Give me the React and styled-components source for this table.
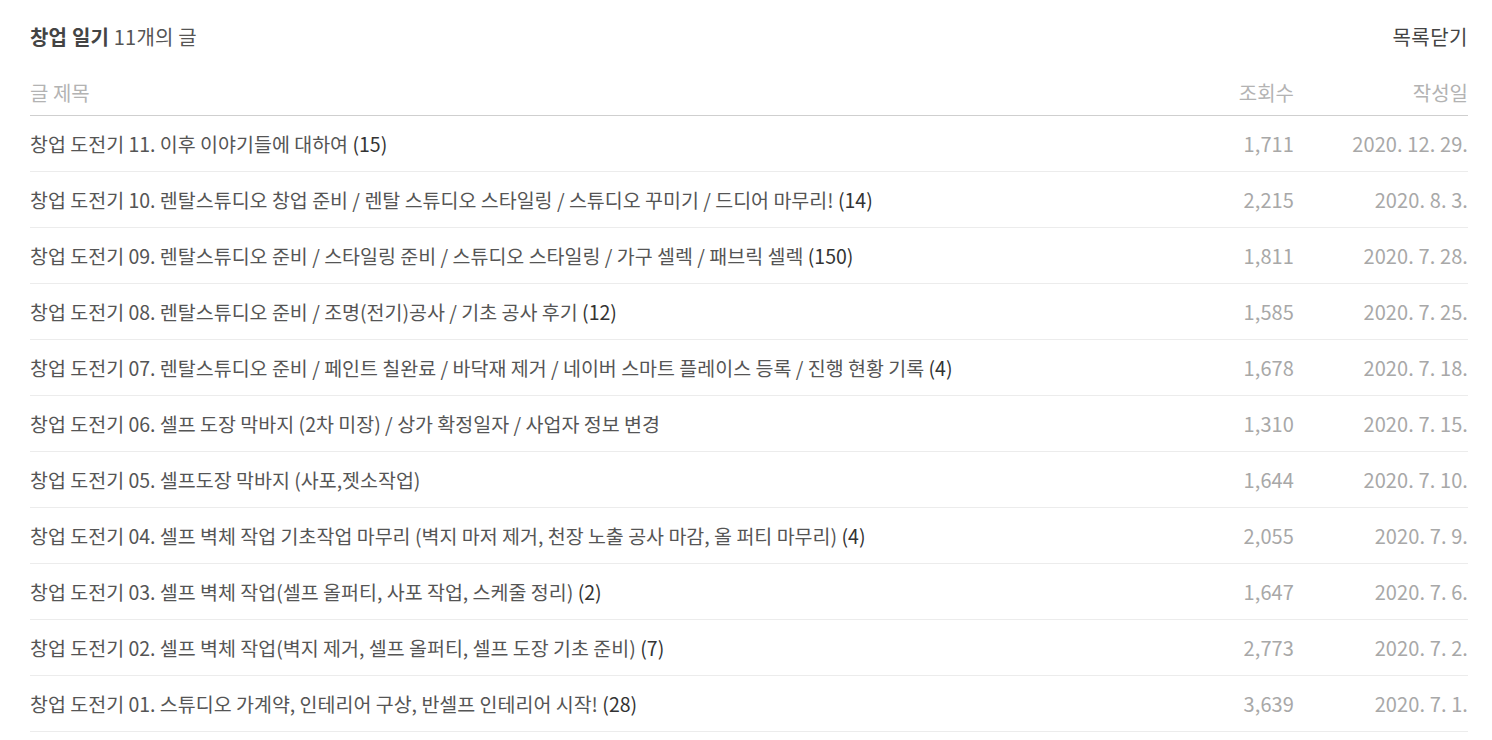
import React from "react";
import styled, { createGlobalStyle } from "styled-components";

const Global = createGlobalStyle`
  body {
    margin: 0;
    background: #fff;
    font-family: "Noto Sans CJK KR", "Noto Sans", sans-serif;
  }
`;

const Wrap = styled.div`
  padding: 13px 24px 0 30px;
`;

const TitleBar = styled.div`
  display: flex;
  align-items: center;
  justify-content: space-between;
  height: 46px;
  font-size: 20px;
  color: #555;
`;

const Title = styled.div`
  color: #555;
  letter-spacing: 0.2px;
  strong {
    font-weight: 700;
    color: #444;
  }
`;

const Close = styled.button`
  border: none;
  background: none;
  padding: 0;
  font: inherit;
  font-size: 20px;
  letter-spacing: 0.5px;
  color: #444;
  cursor: pointer;
`;

const Grid = styled.div`
  display: grid;
  grid-template-columns: 1fr 100px 174px;
  align-items: center;
  height: ${(p) => p.$h}px;
  border-bottom: 1px solid ${(p) => p.$line};
  font-size: 19.5px;
  box-sizing: border-box;
`;

const HeadRow = styled(Grid)`
  margin-top: 10px;
  color: #b3b3b3;
  font-size: 20px;
`;

const Cell = styled.div`
  text-align: ${(p) => (p.$right ? "right" : "left")};
  color: ${(p) => p.$color || "inherit"};
  white-space: nowrap;
  overflow: hidden;
`;

const Meta = styled(Cell)`
  font-size: 20px;
  letter-spacing: 0.1px;
`;

const Subject = styled.span`
  color: #555;
`;

const Count = styled.span`
  color: #333;
`;

const posts = [
  ["창업 도전기 11. 이후 이야기들에 대하여", 15, "1,711", "2020. 12. 29."],
  ["창업 도전기 10. 렌탈스튜디오 창업 준비 / 렌탈 스튜디오 스타일링 / 스튜디오 꾸미기 / 드디어 마무리!", 14, "2,215", "2020. 8. 3."],
  ["창업 도전기 09. 렌탈스튜디오 준비 / 스타일링 준비 / 스튜디오 스타일링 / 가구 셀렉 / 패브릭 셀렉", 150, "1,811", "2020. 7. 28."],
  ["창업 도전기 08. 렌탈스튜디오 준비 / 조명(전기)공사 / 기초 공사 후기", 12, "1,585", "2020. 7. 25."],
  ["창업 도전기 07. 렌탈스튜디오 준비 / 페인트 칠완료 / 바닥재 제거 / 네이버 스마트 플레이스 등록 / 진행 현황 기록", 4, "1,678", "2020. 7. 18."],
  ["창업 도전기 06. 셀프 도장 막바지 (2차 미장) / 상가 확정일자 / 사업자 정보 변경", null, "1,310", "2020. 7. 15."],
  ["창업 도전기 05. 셀프도장 막바지 (사포,젯소작업)", null, "1,644", "2020. 7. 10."],
  ["창업 도전기 04. 셀프 벽체 작업 기초작업 마무리 (벽지 마저 제거, 천장 노출 공사 마감, 올 퍼티 마무리)", 4, "2,055", "2020. 7. 9."],
  ["창업 도전기 03. 셀프 벽체 작업(셀프 올퍼티, 사포 작업, 스케줄 정리)", 2, "1,647", "2020. 7. 6."],
  ["창업 도전기 02. 셀프 벽체 작업(벽지 제거, 셀프 올퍼티, 셀프 도장 기초 준비)", 7, "2,773", "2020. 7. 2."],
  ["창업 도전기 01. 스튜디오 가계약, 인테리어 구상, 반셀프 인테리어 시작!", 28, "3,639", "2020. 7. 1."],
];

export default function App() {
  return (
    <Wrap>
      <Global />
      <TitleBar>
        <Title>
          <strong>창업 일기</strong> 11개의 글
        </Title>
        <Close>목록닫기</Close>
      </TitleBar>
      <HeadRow $h={47} $line="#cfcfcf">
        <Cell>글 제목</Cell>
        <Cell $right>조회수</Cell>
        <Cell $right>작성일</Cell>
      </HeadRow>
      {posts.map(([t, c, v, d]) => (
        <Grid key={t} $h={56} $line="#ececec">
          <Cell>
            <Subject>{t}</Subject>
            {c != null && <Count> ({c})</Count>}
          </Cell>
          <Meta $right $color="#a8a8a8">{v}</Meta>
          <Meta $right $color="#a8a8a8">{d}</Meta>
        </Grid>
      ))}
    </Wrap>
  );
}
